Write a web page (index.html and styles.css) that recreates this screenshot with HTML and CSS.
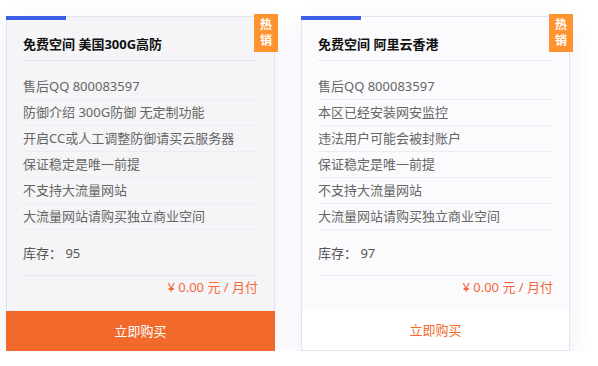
FILE: index.html
```html
<!doctype html>
<html lang="zh-CN">
<head>
<meta charset="utf-8" />
<meta name="viewport" content="width=device-width,initial-scale=1" />
<title>免费空间</title>
<link rel="stylesheet" href="styles.css">
</head>
<body>

<div class="plans">
  <div class="plan plan-active">
    <span class="hot"><b>热</b><b>销</b></span>
    <div class="plan-head">免费空间 美国300G高防</div>
    <ul class="feats">
      <li>售后QQ 800083597</li>
      <li>防御介绍 300G防御 无定制功能</li>
      <li>开启CC或人工调整防御请买云服务器</li>
      <li>保证稳定是唯一前提</li>
      <li>不支持大流量网站</li>
      <li>大流量网站请购买独立商业空间</li>
    </ul>
    <div class="stock">库存：&nbsp;95</div>
    <div class="price">¥ 0.00 元 / 月付</div>
    <a class="buy">立即购买</a>
  </div>

  <div class="plan">
    <span class="hot"><b>热</b><b>销</b></span>
    <div class="plan-head">免费空间 阿里云香港</div>
    <ul class="feats">
      <li>售后QQ 800083597</li>
      <li>本区已经安装网安监控</li>
      <li>违法用户可能会被封账户</li>
      <li>保证稳定是唯一前提</li>
      <li>不支持大流量网站</li>
      <li>大流量网站请购买独立商业空间</li>
    </ul>
    <div class="stock">库存：&nbsp;97</div>
    <div class="price">¥ 0.00 元 / 月付</div>
    <a class="buy">立即购买</a>
  </div>
</div>

</body>
</html>
```

FILE: styles.css
```css
body{margin:0;background:#fff;font-family:"Noto Sans","Noto Sans CJK SC","Microsoft YaHei",sans-serif;font-size:13px;color:#666}
.plans{display:flex;gap:26px;padding:16px 0 0 6px}
.plan{position:relative;width:267px;height:333px;border:1px solid #e2e5ef;background:#fbfbfd;box-shadow:0 8px 22px rgba(40,70,150,0.09);display:flex;flex-direction:column}
.plan::before{content:"";position:absolute;left:-1px;top:-1px;width:60px;height:4px;background:#3d5fe8}
.plan-active{background:#f5f5f7}
.hot{position:absolute;top:-3px;right:-4px;width:24px;height:38px;background:#ff9330;color:#fff;font-size:12px;text-align:center;padding-top:3px;box-sizing:border-box}
.hot b{display:block;height:16px;line-height:16px;overflow:hidden}
.plan-head{margin:0 16px;padding:15px 0 4px;line-height:24px;font-weight:700;color:#111;border-bottom:1px solid #e6e9f2}
.feats{list-style:none;margin:13px 16px 0;padding:0}
.feats li{height:25px;line-height:25px;border-bottom:1px solid #ecedf2}
.stock{margin:11px 16px 0;padding-bottom:9px;line-height:25px;color:#555;border-bottom:1px solid #e8eaf1}
.price{margin:0 16px;line-height:22px;text-align:right;color:#f4683a}
.buy{margin:auto 0 0;height:40px;line-height:40px;text-align:center;background:#fff;color:#f26a2b;cursor:pointer}
.plan-active .buy{margin:auto -1px -1px;background:#f26a2b;color:#fff}
```
